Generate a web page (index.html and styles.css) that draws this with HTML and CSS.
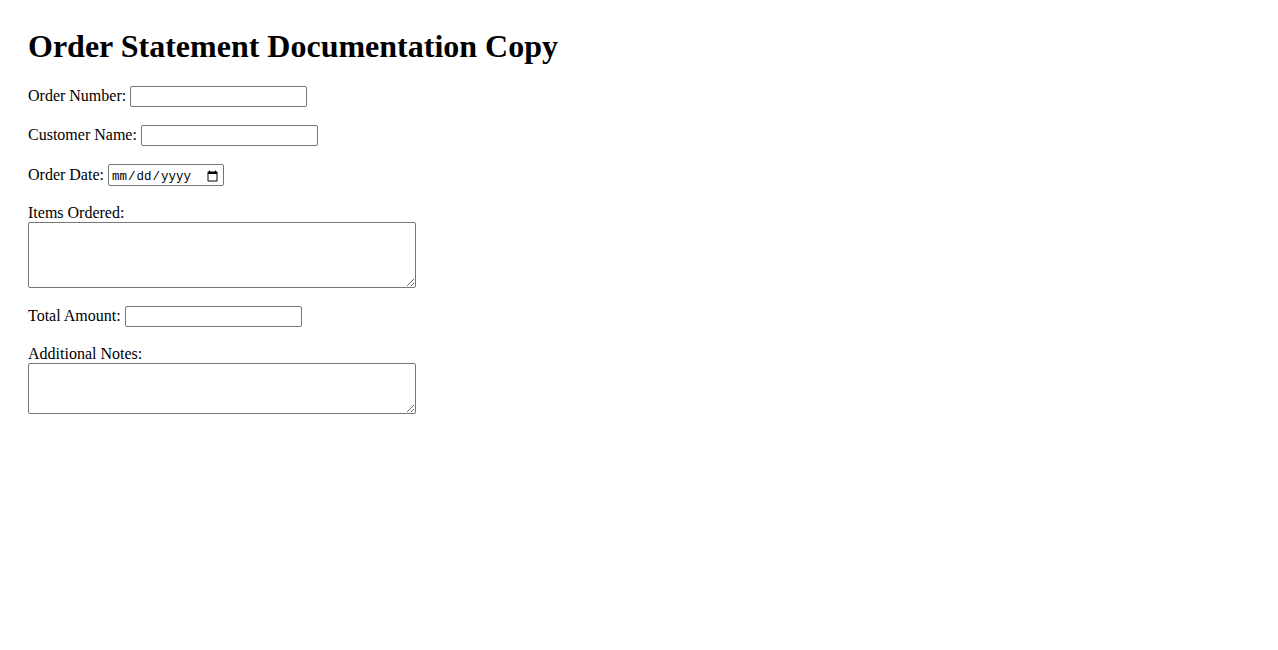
FILE: index.html
```html
<!DOCTYPE html>
<html lang="en">
<head>
<meta charset="utf-8">
<title>Order Statement Documentation Copy</title>
<link rel="stylesheet" href="styles.css">
</head>
<body>
<h1 class="title">Order Statement Documentation Copy</h1>
<form class="form">
  <div class="row">
    <label for="num">Order Number:</label>
    <input class="field" type="text" id="num">
  </div>
  <div class="row">
    <label for="cust">Customer Name:</label>
    <input class="field" type="text" id="cust">
  </div>
  <div class="row">
    <label for="date">Order Date:</label>
    <input class="date" type="date" id="date">
  </div>
  <div class="row">
    <label for="items">Items Ordered:</label>
    <textarea class="area area-4" id="items" rows="4"></textarea>
  </div>
  <div class="row">
    <label for="total">Total Amount:</label>
    <input class="field" type="text" id="total">
  </div>
  <div class="row">
    <label for="notes">Additional Notes:</label>
    <textarea class="area area-3" id="notes" rows="3"></textarea>
  </div>
</form>
</body>
</html>
```
FILE: styles.css
```css
html, body {
  background: #fff;
}
body {
  margin: 8px;
  padding: 20px;
  font-family: "Liberation Serif", "Times New Roman", serif;
  font-size: 16px;
  color: #000;
}
.title {
  margin: 0 0 21px;
  font-size: 32px;
  font-weight: bold;
}
.row {
  margin-bottom: 18px;
}
.field {
  box-sizing: border-box;
  width: 177px;
  height: 21px;
  border: 1px solid #767676;
  border-radius: 2px;
  padding: 1px 2px;
  font-family: "Liberation Sans", Arial, sans-serif;
  font-size: 13.33px;
}
.date {
  box-sizing: border-box;
  width: 116px;
  height: 22px;
  border: 1px solid #767676;
  border-radius: 2px;
  padding: 3px 2px 0;
  font-family: "Liberation Mono", monospace;
  font-size: 12.5px;
}
.area {
  display: block;
  box-sizing: border-box;
  width: 388px;
  margin: 0;
  border: 1px solid #767676;
  border-radius: 2px;
  padding: 2px;
  font-family: "Liberation Mono", monospace;
  font-size: 13.33px;
}
.area-4 {
  height: 66px;
}
.area-3 {
  height: 51px;
}
```
